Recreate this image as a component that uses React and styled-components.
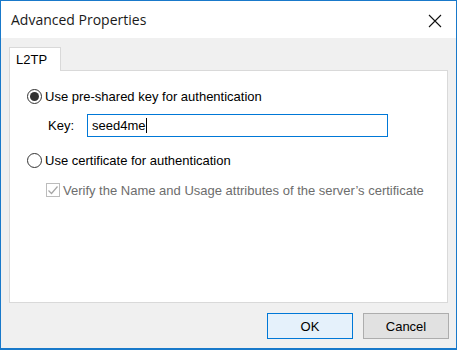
import React from 'react';
import styled, { createGlobalStyle } from 'styled-components';

const GlobalStyle = createGlobalStyle`
  html, body {
    margin: 0;
    padding: 0;
    background: #ffffff;
  }
  * {
    box-sizing: border-box;
  }
`;

const Window = styled.div`
  width: 457px;
  height: 350px;
  border: 1px solid #1979ca;
  border-bottom-width: 2px;
  display: flex;
  flex-direction: column;
  font-family: "Liberation Sans", Arial, sans-serif;
  font-size: 13px;
  color: #000;
`;

const TitleBar = styled.div`
  height: 37px;
  background: #ffffff;
  display: flex;
  align-items: center;
  justify-content: space-between;
  padding: 0 14px 0 10px;
  font-family: "Open Sans", "Noto Sans", sans-serif;
  font-size: 14px;
  color: #1a1a1a;
`;

const CloseButton = styled.span`
  display: flex;
  width: 14px;
  height: 14px;
  margin-top: 2px;
`;

const Body = styled.div`
  flex: 1;
  background: #f0f0f0;
  padding: 9px 8px 9px 8px;
  display: flex;
  flex-direction: column;
`;

const TabStrip = styled.div`
  display: flex;
  position: relative;
  z-index: 1;
  margin-bottom: -1px;
`;

const Tab = styled.div`
  width: 52px;
  height: 24px;
  background: #ffffff;
  border: 1px solid #d9d9d9;
  border-bottom: none;
  padding: 4px 0 0 6px;
`;

const Panel = styled.div`
  height: 233px;
  background: #ffffff;
  border: 1px solid #d9d9d9;
  padding: 17px 0 0 17px;
  display: flex;
  flex-direction: column;
`;

const OptionRow = styled.label`
  display: flex;
  align-items: center;
  gap: 3px;
  height: 16px;
  white-space: nowrap;
  margin-bottom: ${p => p.$gap || 0}px;
  color: ${p => (p.$disabled ? '#6d6d6d' : '#000')};
  padding-left: ${p => p.$indent || 0}px;
`;

const Radio = styled.span`
  width: 15px;
  height: 15px;
  border-radius: 50%;
  border: 1px solid #333333;
  display: flex;
  align-items: center;
  justify-content: center;
  background: #fff;
  &::after {
    content: '';
    width: 9px;
    height: 9px;
    border-radius: 50%;
    background: ${p => (p.$checked ? '#333333' : 'transparent')};
  }
`;

const Checkbox = styled.span`
  width: 14px;
  height: 14px;
  border: 1px solid #bcbcbc;
  background: #fff;
  display: flex;
  align-items: center;
  justify-content: center;
`;

const KeyRow = styled.div`
  display: flex;
  align-items: center;
  margin: 10px 0 15px 21px;
`;

const KeyLabel = styled.span`
  width: 39px;
`;

const TextField = styled.div`
  width: 301px;
  height: 23px;
  border: 1px solid #0078d7;
  display: flex;
  align-items: center;
  padding-left: 4px;
`;

const Caret = styled.span`
  display: inline-block;
  width: 1px;
  height: 15px;
  background: #000;
  margin-left: 1px;
`;

const Footer = styled.div`
  display: flex;
  justify-content: flex-end;
  gap: 10px;
  margin: 10px -1px 0 0;
`;

const Button = styled.button`
  width: 86px;
  height: 26px;
  font-family: "Liberation Sans", Arial, sans-serif;
  font-size: 13px;
  color: #000;
  background: ${p => (p.$primary ? '#e5f1fb' : '#e1e1e1')};
  border: 1px solid ${p => (p.$primary ? '#0078d7' : '#adadad')};
  padding: 0;
`;

export default function App() {
  return (
    <>
      <GlobalStyle />
      <Window>
        <TitleBar>
          <span>Advanced Properties</span>
          <CloseButton>
            <svg width="14" height="14" viewBox="0 0 14 14">
              <path d="M1 1 L13 13 M13 1 L1 13" stroke="#111" strokeWidth="1.1" fill="none" />
            </svg>
          </CloseButton>
        </TitleBar>
        <Body>
          <TabStrip>
            <Tab>L2TP</Tab>
          </TabStrip>
          <Panel>
            <OptionRow>
              <Radio $checked />
              Use pre-shared key for authentication
            </OptionRow>
            <KeyRow>
              <KeyLabel>Key:</KeyLabel>
              <TextField>
                seed4me<Caret />
              </TextField>
            </KeyRow>
            <OptionRow $gap={14}>
              <Radio />
              Use certificate for authentication
            </OptionRow>
            <OptionRow $disabled $indent={19}>
              <Checkbox>
                <svg width="12" height="12" viewBox="0 0 12 12">
                  <path d="M1.5 6.5 L4.5 9.5 L10.5 2.5" stroke="#a6a6a6" strokeWidth="1.2" fill="none" />
                </svg>
              </Checkbox>
              Verify the Name and Usage attributes of the server’s certificate
            </OptionRow>
          </Panel>
          <Footer>
            <Button $primary>OK</Button>
            <Button>Cancel</Button>
          </Footer>
        </Body>
      </Window>
    </>
  );
}
